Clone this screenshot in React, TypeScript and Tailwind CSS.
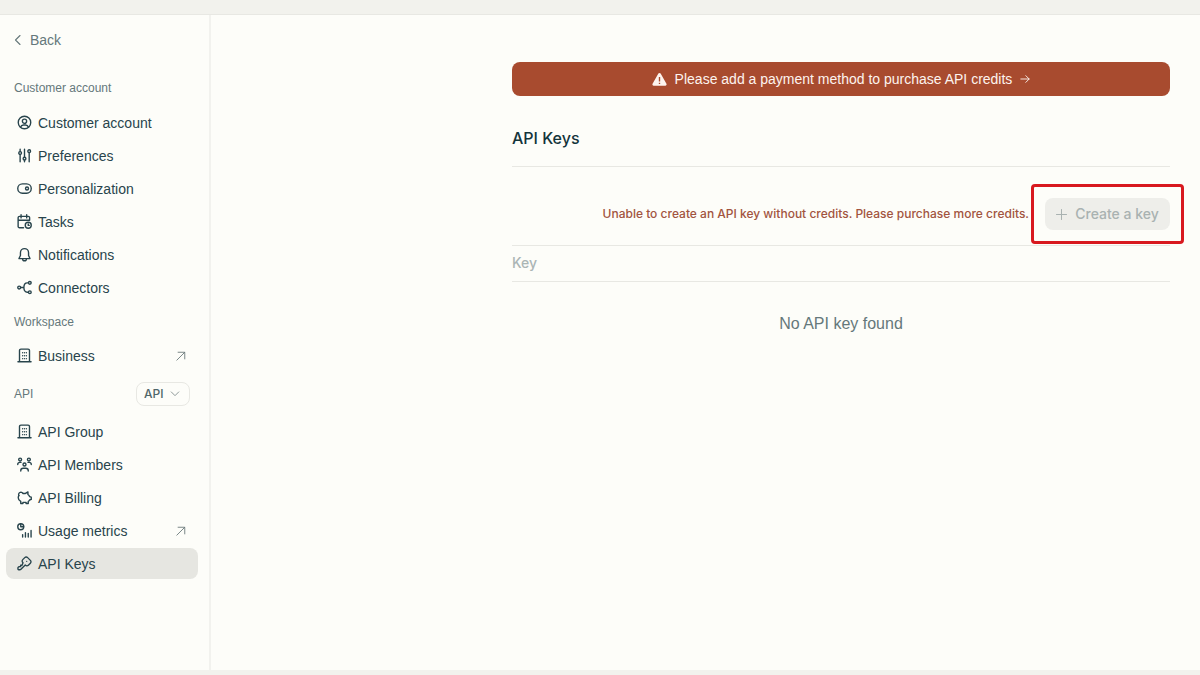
import React, { ReactNode } from "react";

function Icon({ children, className = "size-4" }: { children: ReactNode; className?: string }) {
  return (
    <svg
      viewBox="0 0 24 24"
      fill="none"
      stroke="currentColor"
      strokeWidth={2.2}
      strokeLinecap="round"
      strokeLinejoin="round"
      aria-hidden="true"
      className={`shrink-0 ${className}`}
    >
      {children}
    </svg>
  );
}

const icons = {
  user: (
    <>
      <circle cx="12" cy="12" r="10" />
      <circle cx="12" cy="10" r="3.4" />
      <path d="M5.800 19.200c.7-2.200 2.300-3.300 4.400-3.300h3.600c2.100 0 3.700 1.100 4.400 3.300" />
    </>
  ),
  sliders: (
    <>
      <circle cx="5" cy="8" r="2.200" />
      <path d="M5 2v3.500M5 10.500V22" />
      <circle cx="12" cy="17" r="2.200" />
      <path d="M12 2v12.500M12 19.500V22" />
      <circle cx="19.500" cy="5" r="2.200" />
      <path d="M19.500 7.500V22" />
    </>
  ),
  toggle: (
    <>
      <rect x="1.2" y="4.500" width="21.600" height="15" rx="7.500" />
      <circle cx="16" cy="12" r="2.400" />
    </>
  ),
  tasks: (
    <>
      <path d="M10.500 22H4a2.200 2.200 0 0 1-2.200-2.200V6A2.200 2.200 0 0 1 4 3.800h14A2.200 2.200 0 0 1 20.200 6v4M2 10h18M6.500 1.200v5M15.500 1.200v5" />
      <circle cx="18" cy="18" r="4.800" />
      <path d="M18 16v2.200h1.500" />
    </>
  ),
  bell: (
    <>
      <path d="M12 2.500a6.500 6.500 0 0 0-6.500 6.500v4.500L3.200 18.500h17.600L18.500 13.500V9A6.500 6.500 0 0 0 12 2.500z" />
      <path d="M9 19a3 3 0 0 0 6 0" />
    </>
  ),
  connectors: (
    <>
      <circle cx="3.500" cy="12" r="2.300" />
      <path d="M5.800 12H11M18 4.500h-1.500C13 4.500 11 7.500 11 12s2 7.500 5.500 7.500H18" />
      <circle cx="20.500" cy="4.500" r="2.200" />
      <circle cx="20.500" cy="19.500" r="2.200" />
    </>
  ),
  building: (
    <>
      <path d="M1.500 22h21M4 22V4a2.200 2.200 0 0 1 2.200-2.200h11.600A2.200 2.200 0 0 1 20 4v18" />
      <path d="M9 7.500h.01M15 7.500h.01M9 12.300h.01M15 12.300h.01M9 17h.01M15 17h.01M12 7.500h.01M12 12.300h.01M12 17h.01" />
    </>
  ),
  members: (
    <>
      <circle cx="5" cy="4" r="2.300" />
      <circle cx="19" cy="4" r="2.300" />
      <circle cx="12" cy="12" r="2.400" />
      <path d="M1.200 12v-.5c0-2 1.600-3 3.600-3h1.700M22.800 12v-.5c0-2-1.600-3-3.600-3h-1.700M6 22.500V22c0-2.500 1.500-4 3.800-4h4.400c2.300 0 3.800 1.500 3.800 4v.5" />
    </>
  ),
  pig: (
    <>
      <path d="M10 5.500h3.500L17.500 3v4.200c1.200.8 2.100 1.900 2.600 3.300l2.700 1v3.500l-2.700 1c-.5.900-1.200 1.700-2.100 2.400V21.500h-3.500v-1.700h-5v1.700H6v-3.200C3.500 16.900 2 14.700 2 12.300c0-1.300.3-2.400 1-3.300" />
      <path d="M3 9a3.300 3.300 0 1 1 6.500-3.500" />
    </>
  ),
  usage: (
    <>
      <circle cx="6" cy="6" r="4.800" />
      <path d="M6 1.500V6h4.500M9 22.500v-4M13.500 22.500v-7M18 22.500v-6M22.500 22.500V12" />
    </>
  ),
  key: (
    <>
      <path d="M17 2.600l4.400 4.400a3.200 3.200 0 0 1 0 4.600l-3.200 3.200a3.200 3.200 0 0 1-4.600 0l-.4-.4-6.900 6.900a2 2 0 0 1-1.300.6H2.500a1 1 0 0 1-1-1v-1.500a2 2 0 0 1 .5-1.300L3.500 17h2.300v-2.300h2.300l1.500-3.900-.4-.4a3.200 3.200 0 0 1 0-4.600l3.200-3.200a3.200 3.200 0 0 1 4.600 0z" />
      <path d="M15.500 8.500h.01" />
    </>
  ),
};

type NavEntry = { label: string; icon: keyof typeof icons; external?: boolean; active?: boolean };

const accountItems: NavEntry[] = [
  { label: "Customer account", icon: "user" },
  { label: "Preferences", icon: "sliders" },
  { label: "Personalization", icon: "toggle" },
  { label: "Tasks", icon: "tasks" },
  { label: "Notifications", icon: "bell" },
  { label: "Connectors", icon: "connectors" },
];

const workspaceItems: NavEntry[] = [{ label: "Business", icon: "building", external: true }];

const apiItems: NavEntry[] = [
  { label: "API Group", icon: "building" },
  { label: "API Members", icon: "members" },
  { label: "API Billing", icon: "pig" },
  { label: "Usage metrics", icon: "usage", external: true },
  { label: "API Keys", icon: "key", active: true },
];

function NavList({ items }: { items: NavEntry[] }) {
  return (
    <ul className="flex flex-col gap-0.5">
      {items.map((item) => (
        <li key={item.label}>
          <a
            href="#"
            aria-current={item.active ? "page" : undefined}
            className={`flex h-[31px] items-center gap-1.5 rounded-lg pr-3 pl-[11px] text-sm text-[#28444c] ${
              item.active ? "bg-[#e6e6e1]" : ""
            }`}
          >
            <Icon className="size-[15px]">{icons[item.icon]}</Icon>
            <span className="flex-1">{item.label}</span>
            {item.external && (
              <Icon className="size-2.5 text-[#6f7d7e]">
                <path d="M2 22 21 3M5 3h16v16" />
              </Icon>
            )}
          </a>
        </li>
      ))}
    </ul>
  );
}

export default function App() {
  return (
    <div className="flex min-h-screen flex-col bg-[#fdfdf9] font-['Liberation_Sans',Arial,sans-serif] text-[#13343b]">
      <div className="h-[15px] border-b border-[#e8e8e3] bg-[#f2f2ed]" />
      <div className="flex flex-1">
        <nav aria-label="Settings" className="w-[211px] shrink-0 border-r-2 border-[#f2f2ee] pt-[15px] pr-[11px] pl-1.5">
          <a href="#" className="flex h-5 items-center gap-1.5 pl-1.5 text-sm text-[#65787b]">
            <Icon className="size-3">
              <path d="M16 3 7 12l9 9" />
            </Icon>
            Back
          </a>

          <h2 className="mt-7 pl-2 text-xs leading-5 text-[#65787b]">Customer account</h2>
          <div className="mt-[9px]">
            <NavList items={accountItems} />
          </div>

          <h2 className="mt-[9px] pl-2 text-xs leading-5 text-[#65787b]">Workspace</h2>
          <div className="mt-2">
            <NavList items={workspaceItems} />
          </div>

          <div className="mt-[11px] flex h-6 items-center justify-between pr-2 pl-2">
            <label htmlFor="api-scope" className="text-xs text-[#65787b]">
              API
            </label>
            <div className="relative">
              <select
                id="api-scope"
                className="block h-6 w-[54px] appearance-none rounded-lg border border-[#e8e8e3] bg-transparent pl-[7px] font-['Inter',sans-serif] text-xs font-medium text-[#50666a]"
              >
                <option>API</option>
              </select>
              <Icon className="pointer-events-none absolute top-[7px] right-2.5 size-2.5 text-[#84908f]">
                <path d="m3 7 9 9 9-9" />
              </Icon>
            </div>
          </div>
          <div className="mt-2.5">
            <NavList items={apiItems} />
          </div>
        </nav>

        <main className="flex-1 pt-[47px] pr-[30px] pl-8">
          <div className="ml-auto max-w-[658px]">
            <a
              href="#"
              className="flex h-[34px] items-center justify-center gap-2 rounded-lg bg-[#a84b2f] text-sm text-[#fdf3ee]"
            >
              <svg viewBox="0 0 24 24" aria-hidden="true" className="size-[15px]">
                <path
                  fill="currentColor"
                  fillRule="evenodd"
                  d="M12 1.500c.8 0 1.400.4 1.800 1l9.300 16.400c.8 1.500-.1 3.100-1.800 3.100H2.700c-1.700 0-2.600-1.600-1.800-3.100L10.200 2.500c.4-.6 1-1 1.800-1zM10.900 8v7h2.200V8zM10.900 17v2.200h2.200V17z"
                />
              </svg>
              Please add a payment method to purchase API credits
              <Icon className="size-2.5">
                <path d="M2 12h20M14 4l8 8-8 8" />
              </Icon>
            </a>

            <h1 className="mt-7 border-b border-[#e8e8e3] pb-[14px] font-['Inter',sans-serif] text-base leading-7 font-medium">
              API Keys
            </h1>

            <div className="flex items-center justify-end gap-4 border-b border-[#e8e8e3] pt-[31px] pb-[15px] font-['Inter',sans-serif]">
              <p className="text-xs font-medium whitespace-nowrap text-[#a25440]">
                Unable to create an API key without credits. Please purchase more credits.
              </p>
              <div className="relative">
                <button
                  type="button"
                  disabled
                  className="flex h-8 w-[125px] items-center justify-center gap-2 rounded-lg bg-[#eeeeea] text-sm font-medium text-[#a9b2b1]"
                >
                  <Icon className="size-[11px]">
                    <path d="M12 1v22M1 12h22" />
                  </Icon>
                  Create a key
                </button>
                <div className="pointer-events-none absolute -inset-3.5 rounded-sm border-3 border-[#d8191f]" />
              </div>
            </div>

            <table className="w-full">
              <thead>
                <tr className="border-b border-[#e8e8e3]">
                  <th scope="col" className="h-[35px] text-left font-['Inter',sans-serif] text-sm font-medium text-[#abb5b5]">
                    Key
                  </th>
                </tr>
              </thead>
              <tbody>
                <tr>
                  <td className="pt-8 text-center text-base leading-5 text-[#65787b]">No API key found</td>
                </tr>
              </tbody>
            </table>
          </div>
        </main>
      </div>
      <div className="h-[5px] bg-[#f2f2ed]" />
    </div>
  );
}
